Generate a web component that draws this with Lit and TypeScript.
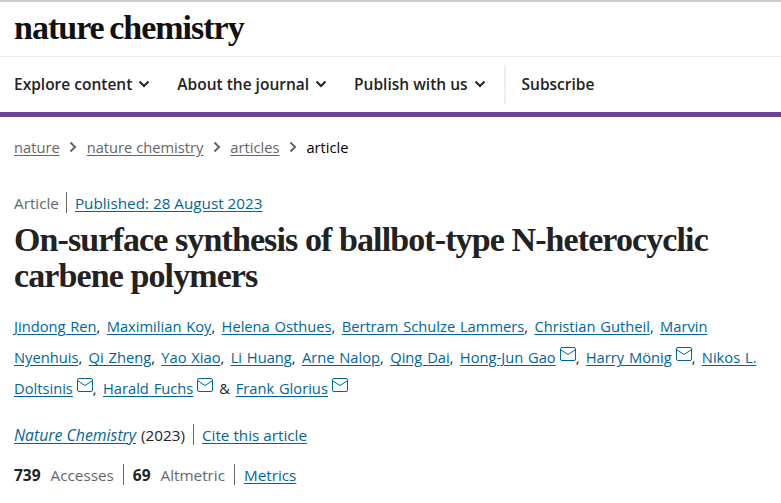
import { LitElement, html, css, svg } from "lit";
import { customElement } from "lit/decorators.js";

const chevron = html`<svg class="chev" width="12" height="8" viewBox="0 0 12 8" fill="none" stroke="currentColor" stroke-width="2"><path d="M1.5 1.5 6 6l4.5-4.5" /></svg>`;
const crumbSep = html`<svg class="sep" width="8" height="12" viewBox="0 0 8 12" fill="none" stroke="#666" stroke-width="2"><path d="M1.5 1.5 6 6l-4.5 4.5" /></svg>`;
const mail = html`<svg class="mail" width="16" height="14" viewBox="0 0 16 14" fill="none" stroke="#069" stroke-width="1">${svg`<rect x="0.5" y="0.5" width="15" height="13" rx="1.5" /><path d="M1 3 8 7.5 15 3" />`}</svg>`;

const authors: [string, boolean][] = [
  ["Jindong Ren", false],
  ["Maximilian Koy", false],
  ["Helena Osthues", false],
  ["Bertram Schulze Lammers", false],
  ["Christian Gutheil", false],
  ["Marvin Nyenhuis", false],
  ["Qi Zheng", false],
  ["Yao Xiao", false],
  ["Li Huang", false],
  ["Arne Nalop", false],
  ["Qing Dai", false],
  ["Hong-Jun Gao", true],
  ["Harry Mönig", true],
  ["Nikos L. Doltsinis", true],
];

@customElement("app-root")
export class AppRoot extends LitElement {
  static styles = css`
    :host {
      display: block;
      width: 781px;
      height: 503px;
      overflow: hidden;
      background: #fff;
      color: #222;
      font-family: "Open Sans", "Noto Sans", sans-serif;
      font-size: 15.25px;
    }

    a {
      color: #069;
      text-decoration: underline;
      text-underline-offset: 2px;
    }

    .brand {
      height: 54px;
      border-top: 2px solid #ccc;
      border-bottom: 1px solid #eee;
      padding-left: 14px;
      display: flex;
      align-items: center;
    }

    .logo {
      font-family: "Liberation Serif", serif;
      font-size: 34px;
      font-weight: 700;
      letter-spacing: -1px;
      word-spacing: -2px;
      color: #111;
      line-height: 1;
      margin-top: -3px;
    }

    nav {
      height: 54px;
      padding: 0 0 1px 14px;
      border-bottom: 5px solid #6b4392;
      display: flex;
      align-items: center;
      font-size: 15.5px;
      font-weight: 600;
      color: #222;
    }

    .nav-item {
      display: flex;
      align-items: center;
      gap: 6px;
      margin-right: 27px;
    }

    .nav-sub {
      align-self: flex-start;
      margin: 8px 0 0 -9px;
      height: 39px;
      border-left: 2px solid #eee;
      padding-left: 16px;
      line-height: 38px;
    }

    .crumbs {
      display: flex;
      align-items: center;
      gap: 9.5px;
      padding: 20px 14px 0;
      height: 20px;
      line-height: 20px;
      font-size: 14.7px;
      color: #000;
    }

    .crumbs a {
      color: #666;
    }

    .kicker {
      display: flex;
      align-items: center;
      margin: 35px 14px 0;
      height: 21px;
      color: #666;
    }

    .pipe {
      border-left: 1px solid #666;
      height: 21px;
      margin: 0 9px;
    }

    .kicker .pipe {
      margin: 0 8px 0 7px;
    }

    .cite .pipe {
      margin: 0 8px;
    }

    h1 {
      margin: 9px 14px 0;
      font-family: "Liberation Serif", serif;
      font-size: 34px;
      line-height: 36px;
      font-weight: 700;
      letter-spacing: -0.9px;
      color: #222;
    }

    .authors {
      margin: 17px 14px 0;
      line-height: 31px;
      font-size: 14.7px;
      word-spacing: 1px;
      color: #222;
    }

    .comma {
      margin-right: 1.5px;
    }

    .amp {
      margin: 0 1px;
    }

    .mail {
      vertical-align: 2px;
      margin-left: 4px;
    }

    .cite {
      display: flex;
      align-items: center;
      margin: 20px 14px 0;
      height: 21px;
    }

    .cite i {
      font-size: 15.8px;
    }

    .year {
      margin-left: 1px;
    }

    .metrics {
      display: flex;
      align-items: center;
      margin: 19px 14px 0;
      height: 21px;
      color: #666;
    }

    .metrics b {
      color: #222;
      font-size: 15.5px;
      font-weight: 700;
      margin-right: 10px;
    }
  `;

  render() {
    return html`
      <div class="brand"><span class="logo">nature chemistry</span></div>
      <nav>
        <span class="nav-item">Explore content ${chevron}</span>
        <span class="nav-item">About the journal ${chevron}</span>
        <span class="nav-item">Publish with us ${chevron}</span>
        <span class="nav-sub">Subscribe</span>
      </nav>
      <div class="crumbs">
        <a>nature</a>${crumbSep}<a>nature chemistry</a>${crumbSep}<a>articles</a>${crumbSep}<span>article</span>
      </div>
      <div class="kicker">Article<span class="pipe"></span><a>Published: 28 August 2023</a></div>
      <h1>On-surface synthesis of ballbot-type N-heterocyclic carbene polymers</h1>
      <div class="authors">
        ${authors.map(([name, hasMail]) => html`<a>${name}</a>${hasMail ? mail : ""}<span class="comma">,</span> `)}<a>Harald Fuchs</a>${mail} <span class="amp">&amp;</span> <a>Frank Glorius</a>${mail}
      </div>
      <div class="cite"><a><i>Nature Chemistry</i></a><span class="year">&nbsp;(2023)</span><span class="pipe"></span><a>Cite this article</a></div>
      <div class="metrics"><b>739</b> Accesses<span class="pipe"></span><b>69</b> Altmetric<span class="pipe"></span><a>Metrics</a></div>
    `;
  }
}
